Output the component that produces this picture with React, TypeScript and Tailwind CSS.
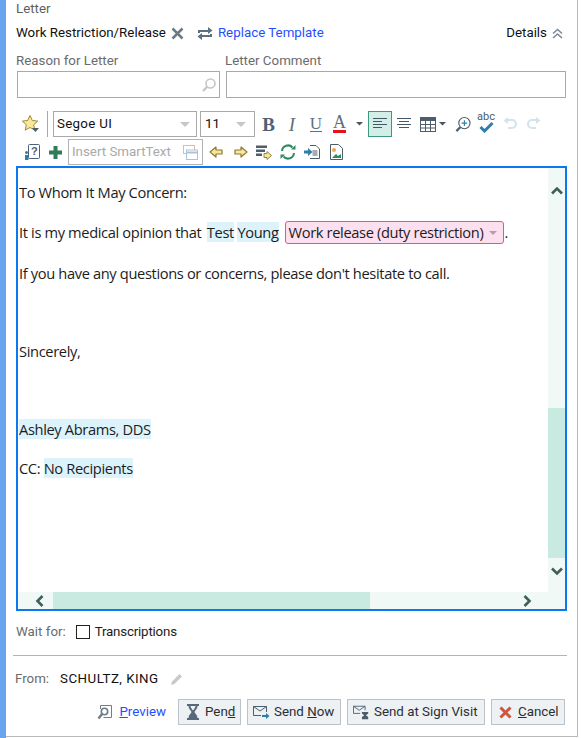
import React from "react";

const Caret = ({ c = "#c4c8cc", w = 10 }: { c?: string; w?: number }) => (
  <svg width={w} height={w / 2} viewBox="0 0 10 5" className="shrink-0"><path d="M0 0h10L5 5z" fill={c} /></svg>
);

const Arrow = ({ flip }: { flip?: boolean }) => (
  <svg width="14" height="12" viewBox="0 0 14 12" className="shrink-0">
    <path d={flip ? "M1 4h6V1l6 5-6 5V8H1z" : "M13 4H7V1L1 6l6 5V8h6z"} fill="#f6e7a0" stroke="#8f7a2c" strokeWidth="1.200" strokeLinejoin="round" />
  </svg>
);

const Btn = ({ icon, children, className }: { icon: React.ReactNode; children: React.ReactNode; className: string }) => (
  <div className={`h-[26px] flex items-center bg-[#edf1f4] border border-[#bcc3c8] text-[#2a2f33] ${className}`}>
    {icon}
    <span>{children}</span>
  </div>
);

const Chip = ({ children }: { children: React.ReactNode }) => <span className="bg-[#ddf3fc] h-[20px] leading-[20px] inline-block">{children}</span>;

export default function App() {
  return (
    <div className="w-[581px] h-[738px] flex bg-white overflow-hidden text-[13.33px] font-['Roboto','Liberation_Sans',sans-serif]">
      <div className="w-[6px] bg-[#6aa3ee]" />
      <div className="w-[572px] h-[737px] bg-white border-r border-b border-[#b9b9b9] flex flex-col pl-[10px] pr-[10px]">
        <div className="h-[18px] leading-[18px] text-[#5f5f5f]">Letter</div>
        <div className="mt-[6px] h-[18px] flex items-center text-[#111]">
          <span>Work Restriction/Release</span>
          <svg className="ml-[5px]" width="13" height="13" viewBox="0 0 13 13"><path d="M1.500 1.500l10 10M11.500 1.500l-10 10" stroke="#6a7a88" strokeWidth="2.600" /></svg>
          <svg className="ml-[13px]" width="16" height="15" viewBox="0 0 16 15"><path d="M1 7V4h10V1l4.500 3.500L11 8V6H3v1zM15 8v3H5v3L.5 10.500 5 7v2h8V8z" fill="#5d6e7e" /></svg>
          <span className="ml-[5px] text-[#1f4fff]">Replace Template</span>
          <span className="ml-auto">Details</span>
          <svg className="ml-[5px] mr-[4px]" width="11" height="11" viewBox="0 0 11 11" fill="none" stroke="#7b8a96" strokeWidth="1.600"><path d="M1 5.500l4.500-4 4.500 4M1 10l4.500-4 4.500 4" /></svg>
        </div>
        <div className="mt-[10px] flex gap-[7px] text-[#6b6b6b] leading-[18px]">
          <div className="w-[202px]">Reason for Letter</div>
          <div>Letter Comment</div>
        </div>
        <div className="mt-[1px] flex gap-[6px] ml-[1px]">
          <div className="w-[203px] h-[27px] border border-[#a9a9a9] flex items-center justify-end pr-[2px]">
            <svg width="16" height="16" viewBox="0 0 16 16" fill="none"><circle cx="9.500" cy="6.500" r="4.500" stroke="#c3c8cc" strokeWidth="1.600" /><path d="M6 10l-4 4" stroke="#c3c8cc" strokeWidth="2.400" /></svg>
          </div>
          <div className="w-[340px] h-[27px] border border-[#a9a9a9]" />
        </div>

        <div className="mt-[13px] h-[26px] flex items-center pl-[6px]">
          <svg width="18" height="20" viewBox="0 0 18 20" className="shrink-0">
            <path d="M8 1.500l2.300 5 5.400.6-4 3.700 1.100 5.400L8 13.500l-4.800 2.700 1.100-5.400-4-3.700 5.400-.6z" fill="#f7e89a" stroke="#a08a35" strokeWidth="1" />
            <path d="M10 14h7l-3.500 4z" fill="#4d5d6c" />
          </svg>
          <div className="ml-[7px] w-px h-[26px] bg-[#a8a8a8]" />
          <div className="ml-[5px] w-[144px] h-[26px] border border-[#a9a9a9] flex items-center pl-[3px] pr-[6px] justify-between text-[#111]">
            <span className="tracking-[0.3px]">Segoe UI</span>
            <Caret />
          </div>
          <div className="ml-[3px] w-[55px] h-[26px] border border-[#a9a9a9] flex items-center pl-[4px] pr-[8px] justify-between text-[#111]">
            <span>11</span>
            <Caret />
          </div>
          <span className="ml-[7px] w-[13px] text-center font-['Liberation_Serif',serif] font-bold text-[19px] text-[#4d6178] leading-none">B</span>
          <span className="ml-[12px] w-[10px] text-center font-['Liberation_Serif',serif] italic text-[19px] text-[#5f7080] leading-none">I</span>
          <span className="ml-[13px] w-[12px] flex justify-center font-['Liberation_Serif',serif] text-[17px] text-[#5f7080] leading-[15px] border-b border-[#5f7080]">U</span>
          <div className="ml-[11px] w-[13px] flex flex-col items-center">
            <span className="font-['Liberation_Serif',serif] text-[18px] text-[#5f7080] leading-[15px]">A</span>
            <div className="w-[13px] h-[3px] bg-[#e8101a]" />
          </div>
          <div className="ml-[10px]"><Caret c="#4a5560" w={7} /></div>
          <div className="ml-[5px] w-[24px] h-[26px] bg-[#d3eee6] border border-[#3d9a80] flex items-center justify-center">
            <svg width="14" height="12" viewBox="0 0 14 12" stroke="#45586a" strokeWidth="1"><path d="M0 .5h14M0 3.500h9M0 6.500h14M0 9.500h9" /></svg>
          </div>
          <svg className="ml-[5px] shrink-0" width="14" height="12" viewBox="0 0 14 12" stroke="#45586a" strokeWidth="1"><path d="M0 .5h14M2 3.500h10M0 6.500h14M2 9.500h10" /></svg>
          <svg className="ml-[9px] shrink-0" width="16" height="15" viewBox="0 0 16 15" fill="none"><rect x=".5" y=".5" width="15" height="14" stroke="#4d5d6c" /><rect x="0" y="0" width="16" height="4" fill="#4d5d6c" /><path d="M0 7.500h16M0 11h16M5.500 4v11M10.500 4v11" stroke="#4d5d6c" /></svg>
          <div className="ml-[3px]"><Caret c="#4a5560" w={7} /></div>
          <svg className="ml-[9px] shrink-0" width="16" height="17" viewBox="0 0 17 17" fill="none"><circle cx="10" cy="7" r="6" stroke="#4d5d6c" strokeWidth="1.200" /><path d="M7 7h6M10 4v6" stroke="#2f7ea8" strokeWidth="1.200" /><path d="M5.500 11.500L1.500 15.500" stroke="#4d5d6c" strokeWidth="2.400" /></svg>
          <div className="ml-[6px] relative w-[18px] h-[18px] shrink-0">
            <span className="absolute left-0 top-[-4px] text-[11px] text-[#4d5d6c] leading-[12px]">abc</span>
            <svg className="absolute left-[2px] top-[6px]" width="15" height="12" viewBox="0 0 15 12" fill="none"><path d="M1.500 6l4 4 8-8" stroke="#2f7ea8" strokeWidth="3" /></svg>
          </div>
          <svg className="ml-[8px] shrink-0" width="14" height="14" viewBox="0 0 14 14" fill="none"><path d="M2 3h7a3.700 3.700 0 010 8H5" stroke="#d5e3ea" strokeWidth="2.200" /><path d="M5 0L.5 3.500 5 7z" fill="#d5e3ea" /></svg>
          <svg className="ml-[10px] shrink-0" width="14" height="14" viewBox="0 0 14 14" fill="none"><path d="M12 3H5a3.700 3.700 0 000 8h4" stroke="#d5e3ea" strokeWidth="2.200" /><path d="M9 0l4.500 3.500L9 7z" fill="#d5e3ea" /></svg>
        </div>

        <div className="mt-[2px] h-[26px] flex items-center pl-[8px]">
          <svg className="shrink-0" width="16" height="16" viewBox="0 0 16 16" fill="none">
            <rect x="4.500" y=".5" width="11" height="14" rx="1" stroke="#4d6178" />
            <circle cx="2.500" cy="8.500" r="1.500" fill="#2f7ea8" /><rect x="1" y="11" width="3.500" height="5" fill="#2f7ea8" />
            <text x="7" y="11" fontSize="11" fontWeight="700" fill="#4d6178" fontFamily="Liberation Sans">?</text>
          </svg>
          <svg className="ml-[9px] shrink-0" width="13" height="13" viewBox="0 0 13 13"><path d="M4.500 0h4v4.500H13v4H8.500V13h-4V8.500H0v-4h4.500z" fill="#2f7d58" /></svg>
          <div className="ml-[6px] w-[135px] h-[26px] border border-[#b3b3b3] flex items-center pl-[3px] pr-[4px] justify-between text-[#a9a9a9]">
            <span>Insert SmartText</span>
            <svg width="15" height="15" viewBox="0 0 15 15" fill="none"><rect x=".5" y=".5" width="11" height="8" stroke="#e8b4a8" /><rect x="3.500" y="5" width="11" height="9.500" fill="#fff" stroke="#a8c4d8" /><path d="M3.500 7.500h11" stroke="#a8c4d8" strokeWidth="2" /></svg>
          </div>
          <div className="ml-[6px]"><Arrow /></div>
          <div className="ml-[11px]"><Arrow flip /></div>
          <svg className="ml-[8px] shrink-0" width="16" height="15" viewBox="0 0 16 15"><path d="M0 .5h11v2.500H0zM0 4.500h9V7H0zM0 8.500h6V11H0z" fill="#4d5d6c" /><path d="M8 8.500h3v-2l4.500 4-4.500 4v-2H8z" fill="#f6e7a0" stroke="#8f7a2c" strokeWidth=".9" /></svg>
          <svg className="ml-[8px] shrink-0" width="16" height="16" viewBox="0 0 16 16" fill="none"><path d="M2 7a6 6 0 0110.500-3.500M14 9a6 6 0 01-10.500 3.500" stroke="#2f8a60" strokeWidth="2" /><path d="M11 5.500h4.500V1zM5 10.500H.5V15z" fill="#2f8a60" /></svg>
          <svg className="ml-[8px] shrink-0" width="16" height="14" viewBox="0 0 16 14" fill="none"><path d="M6 .5h6l3.500 3.500v9.500H6" stroke="#4d5d6c" /><path d="M8.500 6h5M8.500 8h5M8.500 10h5" stroke="#4d5d6c" /><path d="M0 5.500h4V3l4.500 4-4.500 4V8.500H0z" fill="#2f7ea8" /></svg>
          <svg className="ml-[10px] shrink-0" width="13" height="16" viewBox="0 0 13 16" fill="none"><path d="M.5.5h8l4 4v11H.5z" stroke="#4d5d6c" /><circle cx="4" cy="6" r="2" fill="#f0a848" /><path d="M2 14l4-4 2 2 3-2v4z" fill="#2f8a60" /></svg>
        </div>

        <div className="mt-[1px] w-[551px] h-[445px] border-2 border-[#0a78f0] grid grid-cols-[530px_17px] grid-rows-[424px_17px] text-[14.67px] text-[#1c1c1c] font-['Open_Sans',sans-serif] tracking-[-0.36px]">
          <div className="pl-[1px] pt-[4px] overflow-hidden">
            <div className="h-[39px] flex items-center">To Whom It May Concern:</div>
            <div className="h-[42px] flex items-center whitespace-pre">
              <span className="mr-[2px]">It is my medical opinion that </span><Chip>Test</Chip><span> </span><Chip>Young</Chip>
              <span className="ml-[6px] h-[23px] pl-[3px] pr-[6px] rounded-[3px] border border-[#e0559a] bg-[#fde0ef] flex items-center">
                Work release (duty restriction)
                <span className="ml-[6px] mt-[1px]"><Caret c="#b5a0aa" w={8} /></span>
              </span>
              <span>.</span>
            </div>
            <div className="h-[39px] flex items-center">If you have any questions or concerns, please don't hesitate to call.</div>
            <div className="h-[39px]" />
            <div className="h-[39px] flex items-center">Sincerely,</div>
            <div className="h-[39px]" />
            <div className="h-[39px] flex items-center"><Chip>Ashley Abrams, DDS</Chip></div>
            <div className="h-[39px] flex items-center whitespace-pre">CC: <Chip>No Recipients</Chip></div>
          </div>
          <div className="bg-[#f0f9f6] flex flex-col items-center justify-between pt-[18px] pb-[16px] relative">
            <svg width="12" height="9" viewBox="0 0 12 9" fill="none"><path d="M1 7.500l5-5 5 5" stroke="#3f5f5a" strokeWidth="2.600" /></svg>
            <div className="absolute left-0 right-0 top-[240px] h-[150px] bg-[#c9eae0]" />
            <svg width="12" height="9" viewBox="0 0 12 9" fill="none"><path d="M1 1.500l5 5 5-5" stroke="#3f5f5a" strokeWidth="2.600" /></svg>
          </div>
          <div className="bg-[#f0f9f6] relative flex items-center justify-between pl-[17px] pr-[16px]">
            <svg width="9" height="12" viewBox="0 0 9 12" fill="none"><path d="M7.500 1l-5 5 5 5" stroke="#3f5f5a" strokeWidth="2.600" /></svg>
            <div className="absolute top-0 bottom-0 left-[35px] w-[317px] bg-[#c9eae0]" />
            <svg width="9" height="12" viewBox="0 0 9 12" fill="none"><path d="M1.500 1l5 5-5 5" stroke="#3f5f5a" strokeWidth="2.600" /></svg>
          </div>
          <div className="bg-[#f0f9f6]" />
        </div>

        <div className="mt-[12px] h-[18px] flex items-center">
          <span className="text-[#6b6b6b]">Wait for:</span>
          <div className="ml-[10px] w-[14px] h-[14px] border border-[#222]" />
          <span className="ml-[5px] text-[#1c1c1c] tracking-[-0.2px]">Transcriptions</span>
        </div>
        <div className="mt-[14px] ml-[-3px] h-px bg-[#b4b4b4] w-[554px]" />
        <div className="mt-[14px] h-[18px] flex items-center ml-[-1px]">
          <span className="text-[#6b6b6b]">From:</span>
          <span className="ml-[11px] text-[#111] tracking-[0.45px]">SCHULTZ, KING</span>
          <svg className="ml-[11px]" width="13" height="13" viewBox="0 0 13 13"><path d="M9.500 1l2.500 2.500-7.500 7.500L1 12l1-3.500z" fill="#c6cacd" /></svg>
        </div>
        <div className="mt-[11px] flex items-center justify-end gap-[6px] mr-[2px]">
          <svg className="mr-[1px]" width="15" height="15" viewBox="0 0 15 15" fill="none"><path d="M3.500 4V.5h11v12h-8" stroke="#6f7d88" /><circle cx="7.500" cy="6.500" r="3.200" stroke="#6f7d88" strokeWidth="1.600" /><path d="M5 9l-3.500 4.500" stroke="#6f7d88" strokeWidth="2.400" /></svg>
          <span className="mr-[6px] text-[#1f4fff]"><span className="underline">P</span>review</span>
          <Btn className="w-[63px] pl-[8px] gap-[6px]" icon={<svg width="12" height="16" viewBox="0 0 12 16"><path d="M0 0h12v2H10.500c0 3-2.500 4.500-3 6 .5 1.500 3 3 3 6H12v2H0v-2h1.500c0-3 2.500-4.500 3-6-.5-1.500-3-3-3-6H0z" fill="#56687a" /><path d="M3.500 2h5c0 1.500-1.500 3-2.500 4.500C5 5 3.500 3.500 3.500 2z" fill="#edf1f4" /></svg>}>
            Pen<span className="underline">d</span>
          </Btn>
          <Btn className="w-[94px] pl-[5px] gap-[4px]" icon={<svg width="17" height="15" viewBox="0 0 17 15" fill="none"><path d="M.5 1.500h13V7M.5 1.500V10.500H8M.5 1.500L7 6l6.500-4.500" stroke="#4d5d6c" /><path d="M9 10h4V8l3.500 3-3.500 3v-2H9z" fill="#2f7ea8" /></svg>}>
            Send <span className="underline">N</span>ow
          </Btn>
          <Btn className="w-[138px] pl-[5px] gap-[4px]" icon={<svg width="17" height="15" viewBox="0 0 19 15" fill="none"><path d="M.5 .5h13V5M.5 .5V8.500H8M.5 .5L7 5l6.500-4.500" stroke="#4d5d6c" /><path d="M10 7h7v1.500l-2.500 2 2.500 2V15h-7v-2.500l2.500-2-2.500-2z" fill="#4d5d6c" /></svg>}>
            Send at Sign Visit
          </Btn>
          <Btn className="w-[74px] pl-[7px] gap-[6px]" icon={<svg width="13" height="13" viewBox="0 0 13 13"><path d="M1.500 1.500l10 10M11.500 1.500l-10 10" stroke="#d0533c" strokeWidth="3" /></svg>}>
            <span className="underline">C</span>ancel
          </Btn>
        </div>
      </div>
    </div>
  );
}
